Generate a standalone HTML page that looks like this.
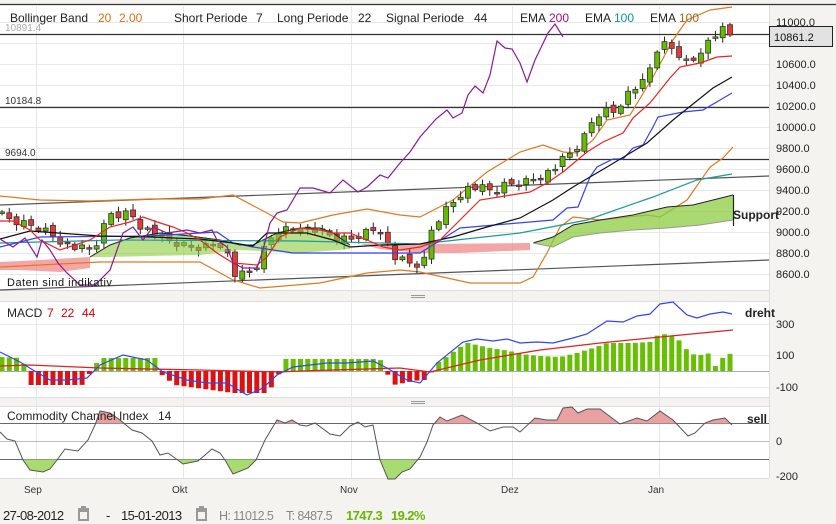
<!DOCTYPE html>
<html><head><meta charset="utf-8"><style>
html,body{margin:0;padding:0;background:#f4f3f0;}
svg{display:block;font-family:"Liberation Sans",sans-serif;}
</style></head><body>
<svg id="s" width="836" height="524" viewBox="0 0 836 524" xmlns="http://www.w3.org/2000/svg">
<rect x="0" y="0" width="836" height="524" fill="#f4f3f0"/>
<rect x="0" y="5" width="769" height="285" fill="#fff"/>
<rect x="0" y="302" width="769" height="95" fill="#fff"/>
<rect x="0" y="407" width="769" height="71" fill="#fff"/>
<line x1="0" y1="4.5" x2="836" y2="4.5" stroke="#333" stroke-width="1.2"/>
<line x1="769.5" y1="5" x2="769.5" y2="478" stroke="#ddd"/>
<line x1="0" y1="290.5" x2="769" y2="290.5" stroke="#ddd"/>
<line x1="0" y1="301.5" x2="769" y2="301.5" stroke="#ddd"/>
<line x1="0" y1="397.5" x2="769" y2="397.5" stroke="#ddd"/>
<line x1="0" y1="406.5" x2="769" y2="406.5" stroke="#ddd"/>
<line x1="0" y1="478.5" x2="769" y2="478.5" stroke="#ddd"/>
<g stroke="#999" stroke-width="1"><line x1="411" y1="295.5" x2="425" y2="295.5"/><line x1="411" y1="297.5" x2="425" y2="297.5"/><line x1="411" y1="401.5" x2="425" y2="401.5"/><line x1="411" y1="403.5" x2="425" y2="403.5"/></g>
<g id="grid" stroke="#e8e8e8" stroke-width="1"></g>
<g id="main"></g>
<g id="macd"></g>
<g id="cci"></g>
<g font-size="12" fill="#222">
<text x="10" y="22">Bollinger Band</text><text x="98" y="22" fill="#e07010">20</text><text x="119" y="22" fill="#e07010">2.00</text>
<text x="174" y="22">Short Periode</text><text x="256" y="22">7</text>
<text x="277" y="22">Long Periode</text><text x="358" y="22">22</text>
<text x="386" y="22">Signal Periode</text><text x="474" y="22">44</text>
<text x="520" y="22">EMA</text><text x="549" y="22" fill="#b0106a">200</text>
<text x="585" y="22">EMA</text><text x="614" y="22" fill="#1090a0">100</text>
<text x="650" y="22">EMA</text><text x="679" y="22" fill="#9a6a20">100</text>
</g>
<g font-size="10" fill="#333">
<text x="5" y="31" fill="#aaa">10891.4</text>
<text x="5" y="104">10184.8</text>
<text x="5" y="156">9694.0</text>
</g>
<text x="7" y="286" font-size="11" fill="#111" letter-spacing="0.5">Daten sind indikativ</text>
<text x="733" y="219" font-size="12" font-weight="bold" fill="#222">Support</text>
<g font-size="11" fill="#222">
<text x="776" y="26">11000.0</text><text x="776" y="68">10600.0</text><text x="776" y="89">10400.0</text><text x="776" y="110">10200.0</text><text x="776" y="131">10000.0</text><text x="776" y="152">9800.0</text><text x="776" y="173">9600.0</text><text x="776" y="194">9400.0</text><text x="776" y="215">9200.0</text><text x="776" y="236">9000.0</text><text x="776" y="257">8800.0</text><text x="776" y="278">8600.0</text>
</g>
<rect x="769.5" y="26.5" width="63" height="20" fill="#e2e2e2" stroke="#222"/>
<text x="774" y="41" font-size="11" fill="#111">10861.2</text>
<g font-size="12" fill="#222"><text x="7" y="317">MACD</text><text x="47" y="317" fill="#d00">7</text><text x="61" y="317" fill="#d00">22</text><text x="82" y="317" fill="#d00">44</text>
<text x="7" y="420">Commodity Channel Index</text><text x="158" y="420">14</text></g>
<text x="745" y="317" font-size="12" font-weight="bold" fill="#222">dreht</text>
<text x="747" y="423" font-size="12" font-weight="bold" fill="#222">sell</text>
<g font-size="11" fill="#222"><text x="776" y="328">300</text><text x="776" y="359">100</text><text x="776" y="391">-100</text><text x="776" y="445">0</text><text x="776" y="480">-200</text></g>
<g font-size="10" fill="#333"><text x="24" y="493">Sep</text><text x="172" y="493">Okt</text><text x="340" y="493">Nov</text><text x="501" y="493">Dez</text><text x="648" y="493">Jan</text></g>
<g font-size="13" fill="#222" letter-spacing="-0.6">
<text x="3" y="520">27-08-2012</text>
<text x="106" y="520">-</text>
<text x="121" y="520">15-01-2013</text>
<text x="219" y="520" fill="#888" font-size="12.5">H: 11012.5</text>
<text x="286" y="520" fill="#888" font-size="12.5">T: 8487.5</text>
<text x="346" y="520" fill="#66b800" font-weight="bold">1747.3</text>
<text x="391" y="520" fill="#66b800" font-weight="bold">19.2%</text>
</g>
<g fill="#999"><rect x="78" y="508" width="11" height="13"/><rect x="196" y="508" width="11" height="13"/></g>
<g fill="#f4f3f0"><rect x="80" y="512" width="7" height="7"/><rect x="198" y="512" width="7" height="7"/></g>
<g fill="#999"><rect x="81" y="506" width="5" height="3"/><rect x="199" y="506" width="5" height="3"/></g>
</svg>
<script>
(function(){
var NS="http://www.w3.org/2000/svg";
function el(p,t,a){var e=document.createElementNS(NS,t);for(var k in a)e.setAttribute(k,a[k]);document.getElementById(p).appendChild(e);return e;}
function pts(a){var s=[];for(var i=0;i<a.length;i+=2)s.push(a[i]+","+a[i+1]);return s.join(" ");}
function pl(p,a,c,w){el(p,"polyline",{points:pts(a),fill:"none",stroke:c,"stroke-width":w||1});}
function pg(p,a,c,o){el(p,"polygon",{points:pts(a),fill:c,"fill-opacity":o||1});}
[36,183,351,512,659].forEach(function(x){el("grid","line",{x1:x+.5,y1:5,x2:x+.5,y2:478});});
for(var y=22;y<=285;y+=21)el("grid","line",{x1:0,y1:y+.5,x2:769,y2:y+.5});
[324,355,387].forEach(function(y){el("grid","line",{x1:0,y1:y+.5,x2:769,y2:y+.5});});
[34,107,159].forEach(function(v){el("main","line",{x1:0,y1:v+.5,x2:769,y2:v+.5,stroke:"#333","stroke-width":1.2});});
pl("main",[0,205,769,176],"#555",1.2);
pl("main",[0,290,769,260],"#555",1.2);
pg("main",[0,262,40,260,90,257,90,268,60,272,20,270,0,270],"#f08080",0.7);
pg("main",[360,244,420,244,530,243,530,250,460,253,420,253,380,249],"#f08080",0.7);
pl("main",[0,196,40,200,90,201,150,199,200,199,233,195,267,213,283,222,300,223,333,215,367,209,400,215,420,217,453,200,487,172,520,152,543,145,563,152,577,153,593,140,607,120,630,115,653,77,673,40,687,20,710,10,732,7],"#e07a20",1.2);
pl("main",[0,267,40,265,100,262,200,262,233,280,260,288,320,283,367,273,400,270,420,272,470,283,520,283,533,277,547,253,560,227,573,217,600,220,647,215,660,217,687,200,710,167,723,158,733,147],"#e07a20",1.2);
var K=[0,215,15,222,30,225,45,230,60,240,75,248,90,250,100,240,108,213,120,215,130,212,140,225,152,232,165,240,180,245,195,248,210,245,220,243,228,255,235,275,245,275,255,270,262,253,275,232,290,228,305,228,320,232,335,238,350,240,365,232,380,228,388,245,395,258,405,262,415,266,425,260,432,228,445,210,455,200,465,188,480,188,495,192,505,185,520,183,535,178,548,172,555,168,565,158,575,150,585,136,595,116,605,110,615,112,625,95,635,88,645,82,655,55,660,43,670,47,680,55,690,65,700,50,712,38,722,30,733,38];
function iy(x){for(var i=0;i<K.length-2;i+=2){if(x<=K[i+2]){var t=(x-K[i])/(K[i+2]-K[i]);return K[i+1]+t*(K[i+3]-K[i+1]);}}return K[K.length-1];}
var prev=iy(0);
for(var i=0;i<101;i++){var x=2+i*7.28;var c=iy(x)+((i*37)%11-5)*0.8;var o=prev+((i*53)%7-3)*0.9;prev=c;
var up=c<o;var tp=Math.min(o,c),bt=Math.max(o,c);if(bt-tp<1.5)bt=tp+1.5;
el("main","line",{x1:x,y1:tp-2-(i*13)%5,x2:x,y2:bt+2+(i*7)%5,stroke:"#222","stroke-width":1});
el("main","rect",{x:x-2.5,y:tp,width:5,height:bt-tp,fill:up?"#66bb00":"#e53935",stroke:"#333","stroke-width":0.8});}
pg("main",[90,257,110,245,130,238,160,233,190,236,220,240,240,245,253,245,277,233,300,228,320,228,333,233,350,245,350,249,300,253,260,251,240,250,200,255,150,256,110,257],"#8ccc40",0.6);
pg("main",[533,243,553,237,573,225,600,220,633,215,667,207,693,205,733,195,733,220,700,225,667,228,633,230,600,233,573,237,553,247],"#8ccc40",0.75);
pl("main",[90,257,110,245,130,238,160,233,190,236,220,240,240,245,253,245,277,233,300,228,320,228,333,233,350,245],"#222",1);
pl("main",[533,243,553,237,573,225,600,220,633,215,667,207,693,205,733,195],"#222",1);
pl("main",[533,243,553,247,573,237,600,233,633,230,667,228,700,225,733,220],"#999",1);
el("main","line",{x1:733.5,y1:195,x2:733.5,y2:226,stroke:"#222","stroke-width":1.2});
pl("main",[0,243,120,240,300,241,420,244,520,233,587,220,653,197,697,180,732,174],"#1a9a9a",1.2);
pl("main",[0,247,40,237,150,236,217,232,233,243,253,247,293,253,420,253,460,228,553,220,567,208,578,207,590,177,597,167,613,159,623,159,633,148,643,145,653,127,658,117,683,112,703,110,732,93],"#3344ee",1.2);
pl("main",[0,239,30,231,100,236,150,237,200,239,233,243,253,246,267,233,277,233,307,233,333,240,350,247,383,245,420,244,453,237,487,227,520,218,553,200,573,187,607,167,647,143,673,120,713,88,732,77],"#111",1.2);
pl("main",[0,221,13,221,30,230,40,240,60,250,90,240,110,227,130,222,143,217,157,222,173,227,187,233,200,240,217,253,233,263,257,265,267,257,280,237,300,228,320,230,333,233,350,233,367,240,383,247,400,250,420,247,440,240,460,220,480,200,530,192,547,183,563,172,587,152,603,142,623,133,633,118,650,103,670,78,680,67,700,63,717,57,732,56],"#ee2222",1.2);
pl("main",[0,239,13,247,25,238,37,257,42,240,50,250,58,263,67,273,80,285,95,285,110,270,123,233,133,227,143,240,153,227,167,233,187,230,200,233,212,230,217,240,227,247,233,263,243,268,257,268,263,250,270,223,277,213,287,210,300,188,313,188,330,193,343,180,358,192,367,187,380,175,388,178,400,163,410,152,420,137,436,119,447,110,453,118,462,113,468,95,475,86,483,93,490,75,497,41,505,48,512,49,520,63,527,82,535,60,548,33,555,24,563,37],"#8a1a9a",1.2);
el("macd","line",{x1:0,y1:371.5,x2:769,y2:371.5,stroke:"#aab","stroke-width":1});
var M=[0,357,23,358,27,385,82,385,100,358,157,358,158,372,175,385,233,393,267,393,277,380,283,359,380,359,393,385,420,380,427,380,437,363,445,358,453,352,462,346,468,343,490,348,510,351,520,354,540,356,560,357,577,353,593,348,607,343,633,343,650,342,658,335,667,334,673,337,682,342,688,352,695,355,703,355,710,353,718,372,725,351,732,355];
function im(x){for(var i=0;i<M.length-2;i+=2){if(x<=M[i+2]){var t=(x-M[i])/(M[i+2]-M[i]||1);return M[i+1]+t*(M[i+3]-M[i+1]);}}return M[M.length-1];}
for(var j=0;j<101;j++){var xx=2+j*7.28;var v=im(xx);if(Math.abs(v-371)<1)continue;
el("macd","rect",{x:xx-2.5,y:Math.min(v,371),width:5,height:Math.abs(v-371),fill:v<371?"#66c000":"#dd1111"});}
pl("macd",[0,366,30,365,100,368,200,370,280,372,300,371,400,368,430,372,480,360,540,350,600,343,650,338,733,330],"#dd2222",1.3);
pl("macd",[0,352,20,362,33,370,50,380,67,380,87,378,100,365,123,355,147,360,163,372,187,380,207,383,227,383,247,395,263,388,277,375,293,367,327,363,347,363,373,361,387,368,407,380,420,383,437,363,463,342,477,339,493,341,507,339,520,343,537,342,553,343,573,338,587,334,607,321,623,322,637,316,650,314,660,304,673,302,687,315,697,318,710,314,723,312,732,314],"#3344ee",1.2);
el("cci","line",{x1:0,y1:423.5,x2:769,y2:423.5,stroke:"#667","stroke-width":1});
el("cci","line",{x1:0,y1:441.5,x2:769,y2:441.5,stroke:"#bbc","stroke-width":1});
el("cci","line",{x1:0,y1:459.5,x2:769,y2:459.5,stroke:"#667","stroke-width":1});
var C=[0,432,7,439,15,441,23,460,30,470,43,472,50,469,57,460,65,449,78,451,88,440,95,425,100,411,110,413,120,420,132,430,142,433,152,441,160,455,168,453,175,458,183,464,198,461,212,449,220,453,225,460,233,474,248,468,256,460,265,440,277,420,285,423,292,420,300,425,307,426,315,423,330,434,340,436,350,426,358,422,365,427,373,425,380,460,388,479,395,479,402,472,410,469,420,457,427,442,433,425,440,417,447,421,462,415,477,423,490,431,503,427,513,427,520,432,535,418,547,420,557,420,563,408,572,407,578,413,587,409,600,409,620,424,637,418,647,421,660,411,673,420,688,436,695,433,705,423,713,420,725,418,732,425];
var defs=el("cci","defs",{});
var c1=document.createElementNS(NS,"clipPath");c1.setAttribute("id","ca");var r1=document.createElementNS(NS,"rect");r1.setAttribute("x",0);r1.setAttribute("y",400);r1.setAttribute("width",769);r1.setAttribute("height",23.5);c1.appendChild(r1);defs.appendChild(c1);
var c2=document.createElementNS(NS,"clipPath");c2.setAttribute("id","cb");var r2=document.createElementNS(NS,"rect");r2.setAttribute("x",0);r2.setAttribute("y",459.5);r2.setAttribute("width",769);r2.setAttribute("height",30);c2.appendChild(r2);defs.appendChild(c2);
el("cci","polygon",{points:pts(C.concat([732,423.5,0,423.5])),fill:"#e8a0a0","clip-path":"url(#ca)"});
el("cci","polygon",{points:pts(C.concat([732,459.5,0,459.5])),fill:"#a8dc70","clip-path":"url(#cb)"});
pl("cci",C,"#555",1);
})();
</script>
</body></html>
